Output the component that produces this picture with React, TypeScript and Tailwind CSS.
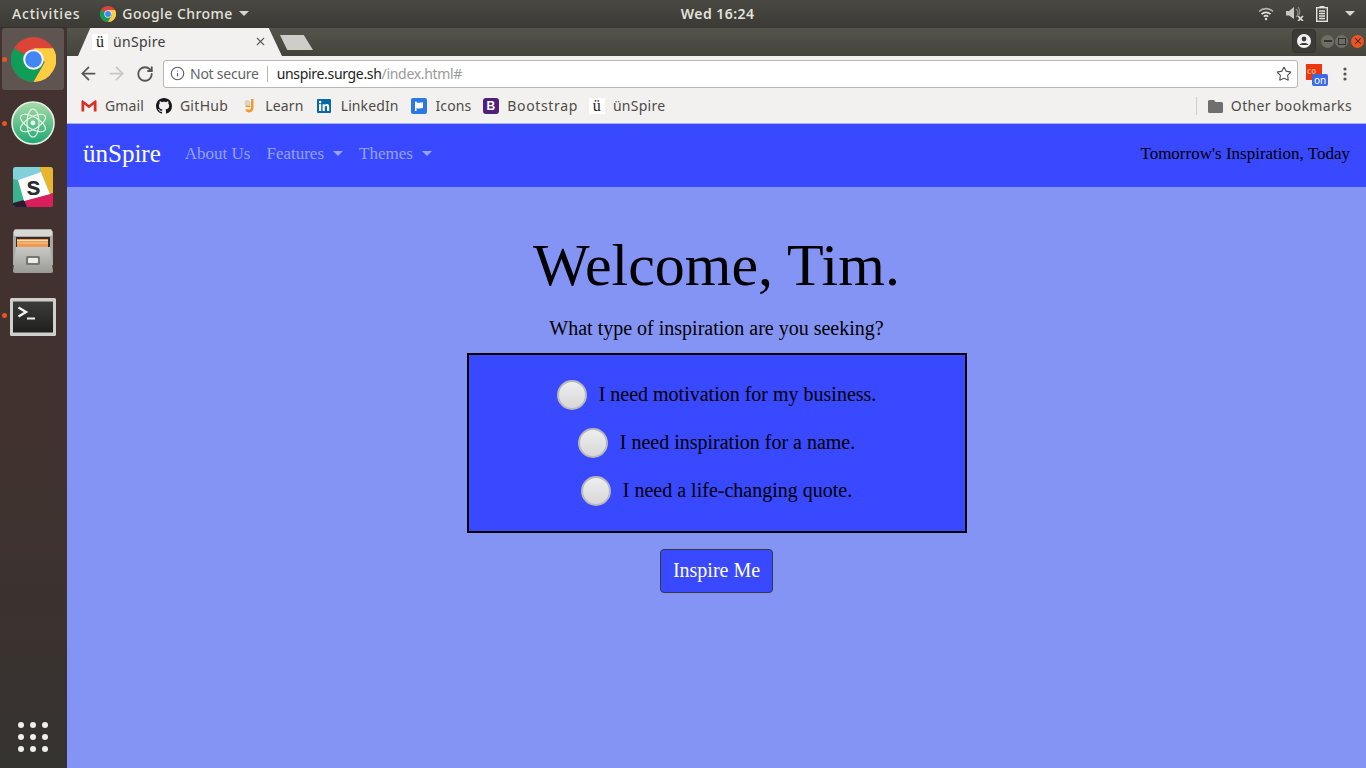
import { ArrowLeft, ArrowRight, RotateCw, Info, Star, X } from 'lucide-react'

const uiFont = "font-['Noto_Sans',sans-serif]"
const serif = "font-['Liberation_Serif',serif]"

function ChromeLogo({ size }: { size: number }) {
  return (
    <svg width={size} height={size} viewBox="0 0 48 48">
      <circle cx="24" cy="24" r="24" fill="#db4437" />
      <path d="M24 24 L3.2 12 A24 24 0 0 0 24 48 L36 27 Z" fill="#0f9d58" />
      <path d="M24 12 L45 12 A24 24 0 0 1 24 48 L36 27 Z" fill="#ffcd40" />
      <circle cx="24" cy="24" r="11" fill="#f1f1f1" />
      <circle cx="24" cy="24" r="8.8" fill="#4285f4" />
    </svg>
  )
}

function AtomIcon() {
  return (
    <svg width="44" height="44" viewBox="0 0 44 44">
      <defs>
        <linearGradient id="atomBg" x1="0" y1="0" x2="0" y2="1">
          <stop offset="0" stopColor="#a8dca6" />
          <stop offset="1" stopColor="#1fa873" />
        </linearGradient>
      </defs>
      <circle cx="22" cy="22" r="21" fill="url(#atomBg)" stroke="#e6efe8" strokeWidth="1.6" />
      <g fill="none" stroke="#e8f5ea" strokeWidth="1.2">
        <ellipse cx="22" cy="22" rx="14" ry="6" transform="rotate(30 22 22)" />
        <ellipse cx="22" cy="22" rx="14" ry="6" transform="rotate(-30 22 22)" />
        <ellipse cx="22" cy="22" rx="14" ry="6" transform="rotate(90 22 22)" />
      </g>
      <circle cx="22" cy="22" r="2.4" fill="#e8f5ea" />
    </svg>
  )
}

function SlackIcon() {
  return (
    <svg width="40" height="40" viewBox="0 0 40 40">
      <rect width="40" height="40" rx="3" fill="#3bb38f" />
      <path d="M3 0 H27 L28 5 L5 13 L0 12 V3 A3 3 0 0 1 3 0Z" fill="#82d0da" />
      <path d="M27 0 H37 A3 3 0 0 1 40 3 V26 L37 27 L28 5Z" fill="#e9b52e" />
      <path d="M37 27 L40 26 V37 A3 3 0 0 1 37 40 H14 L11 34Z" fill="#d91d5d" />
      <path d="M0 36 L11 33 L14 40 H3 A3 3 0 0 1 0 37Z" fill="#2a1a30" />
      <path d="M5 13 L28 5 L37 27 L11 34Z" fill="#ffffff" />
      <text x="20.5" y="28" textAnchor="middle" fontFamily="Liberation Sans, sans-serif" fontWeight="700" fontSize="26" fill="#2b2a30">s</text>
    </svg>
  )
}

function FilesIcon() {
  return (
    <svg width="42" height="44" viewBox="0 0 42 44">
      <defs>
        <linearGradient id="cabinetFront" x1="0" y1="0" x2="0" y2="1">
          <stop offset="0" stopColor="#c9c9c5" />
          <stop offset="1" stopColor="#9a9a96" />
        </linearGradient>
      </defs>
      <path d="M3 0 H39 L41 3 V36 H1 V3Z" fill="#a8a8a4" />
      <rect x="2" y="1" width="38" height="6" rx="1.5" fill="#d8d8d4" />
      <rect x="4" y="8" width="34" height="11" fill="#33302c" />
      <rect x="5" y="10" width="31" height="8" fill="#ee9a54" />
      <rect x="5" y="11" width="31" height="1" fill="#f8e2b8" />
      <rect x="5" y="13.5" width="31" height="1" fill="#f8c98a" />
      <path d="M4 18 H38 L41 42 a2 2 0 0 1 -2 2 H3 a2 2 0 0 1 -2 -2Z" fill="url(#cabinetFront)" />
      <rect x="14" y="27" width="14" height="9" rx="1.5" fill="#77776f" />
      <rect x="16" y="29" width="10" height="5" rx="1" fill="#ecece8" />
    </svg>
  )
}

function TerminalIcon() {
  return (
    <svg width="46" height="38" viewBox="0 0 46 38" className="mt-[3px]">
      <defs>
        <linearGradient id="termBg" x1="0" y1="0" x2="0" y2="1">
          <stop offset="0" stopColor="#3c3c3a" />
          <stop offset="1" stopColor="#1f1f1e" />
        </linearGradient>
      </defs>
      <rect width="46" height="38" rx="1.5" fill="#cfcfcb" />
      <rect x="3" y="3.5" width="40" height="31" fill="url(#termBg)" />
      <path d="M8.5 9.5 L16 14 L8.5 18.5" fill="none" stroke="#f2f2f2" strokeWidth="2.4" />
      <rect x="17" y="19.5" width="8" height="2" fill="#f2f2f2" />
    </svg>
  )
}

function GmailIcon() {
  return (
    <svg width="16" height="14" viewBox="0 0 16 14">
      <path d="M1 2 L8 7.5 L15 2 V12 H1Z" fill="#f4f4f4" />
      <path d="M0.5 2 V12.5 H3.2 V5.5 L8 9.3 L12.8 5.5 V12.5 H15.5 V2 L14.5 1 L8 6 L1.5 1Z" fill="#d93025" />
    </svg>
  )
}

function GithubIcon() {
  return (
    <svg width="16" height="16" viewBox="0 0 16 16" fill="#18171c">
      <path d="M8 0C3.58 0 0 3.58 0 8c0 3.54 2.29 6.53 5.47 7.59.4.07.55-.17.55-.38 0-.19-.01-.82-.01-1.49-2.01.37-2.53-.49-2.69-.94-.09-.23-.48-.94-.82-1.13-.28-.15-.68-.52-.01-.53.63-.01 1.08.58 1.23.82.72 1.21 1.87.87 2.33.66.07-.52.28-.87.51-1.07-1.78-.2-3.64-.89-3.64-3.95 0-.87.31-1.59.82-2.15-.08-.2-.36-1.02.08-2.12 0 0 .67-.21 2.2.82.64-.18 1.32-.27 2-.27s1.36.09 2 .27c1.53-1.04 2.2-.82 2.2-.82.44 1.1.16 1.92.08 2.12.51.56.82 1.27.82 2.15 0 3.07-1.87 3.75-3.65 3.95.29.25.54.73.54 1.48 0 1.07-.01 1.93-.01 2.2 0 .21.15.46.55.38A8.01 8.01 0 0 0 16 8c0-4.42-3.58-8-8-8z" />
    </svg>
  )
}

function LearnIcon() {
  return (
    <svg width="16" height="16" viewBox="0 0 16 16">
      <circle cx="6.5" cy="5" r="3" fill="#d9d4c8" />
      <path d="M10 1 H12.5 V10 A4.5 4.5 0 0 1 4 12 L6 11 A2.4 2.4 0 0 0 10 10Z" fill="#f29a2e" />
      <rect x="4.5" y="7.5" width="5" height="1.6" fill="#f29a2e" />
    </svg>
  )
}

function LinkedinIcon() {
  return (
    <svg width="16" height="16" viewBox="0 0 16 16">
      <rect y="1" width="14" height="14" rx="1" fill="#0568a8" />
      <rect x="2" y="6.2" width="2.2" height="6.8" fill="#fff" />
      <circle cx="3.1" cy="4.1" r="1.3" fill="#fff" />
      <path d="M5.6 6.2 H7.7 V7.2 C8.2 6.4 9 6 9.9 6 C11.6 6 12.2 7.1 12.2 8.8 V13 H10 V9.3 C10 8.4 9.7 7.9 9 7.9 C8.2 7.9 7.8 8.5 7.8 9.3 V13 H5.6Z" fill="#fff" />
    </svg>
  )
}

function IconsIcon() {
  return (
    <svg width="16" height="16" viewBox="0 0 16 16">
      <rect width="16" height="16" rx="2" fill="#2a78e4" />
      <path d="M4 3.5 H5.5 V4.2 C7.5 5.2 9 4.4 12 4.2 V10 C9 10.2 7.5 11 5.5 10 V13 H4Z" fill="#fff" />
    </svg>
  )
}

function BootstrapIcon() {
  return (
    <div className="w-4 h-4 rounded-[3px] bg-[#4f1f7a] flex items-center justify-center text-white text-[12px] font-bold font-['Liberation_Sans',sans-serif]">
      B
    </div>
  )
}

function Favicon() {
  return (
    <div className={`w-4 h-4 bg-white flex items-center justify-center text-[16px] leading-none text-[#222] ${serif}`}>
      ü
    </div>
  )
}

function Bookmark({ icon, label, className }: { icon: React.ReactNode; label: string; className: string }) {
  return (
    <div className={`flex items-center gap-2 text-[14px] leading-none text-[#4f4b47] ${className}`}>
      {icon}
      <span>{label}</span>
    </div>
  )
}

function DockItem({ children, active, running }: { children: React.ReactNode; active?: boolean; running?: boolean }) {
  return (
    <div className={`relative w-[62px] h-[62px] ml-[2px] mb-[2px] rounded-[3px] flex items-center justify-center ${active ? 'bg-[#5f5550]' : ''}`}>
      {running && <span className="absolute left-[0px] top-[29px] w-[5px] h-[5px] rounded-full bg-[#e95420]" />}
      {children}
    </div>
  )
}

function Radio({ label }: { label: string }) {
  return (
    <label className="flex items-center justify-center h-[48px]">
      <span className="w-[30px] h-[30px] rounded-full border-2 border-[#b8b8b8] bg-gradient-to-b from-[#ededed] to-[#d8d8d8] mt-[1px]" />
      <span className="ml-[12px] text-[20px] leading-none text-black">{label}</span>
    </label>
  )
}

export default function App() {
  return (
    <div className={`w-[1366px] h-[768px] overflow-hidden flex flex-col ${uiFont}`}>
      {/* ubuntu top bar */}
      <div className="h-[27px] shrink-0 flex items-center bg-gradient-to-b from-[#4a4944] to-[#3b3a35] text-[#e4e2dc] text-[14px] font-medium">
        <span className="ml-[12px] tracking-[0.8px]">Activities</span>
        <span className="ml-[20px]"><ChromeLogo size={16} /></span>
        <span className="ml-[6px] tracking-[0.45px]">Google Chrome</span>
        <span className="ml-[6px] w-0 h-0 border-x-[5px] border-x-transparent border-t-[5px] border-t-[#d8d6d0]" />
        <span className="ml-[432px] font-semibold tracking-[0.45px]">Wed 16:24</span>
        <div className="ml-auto mr-[11px] flex items-center gap-[12px]">
          <svg width="16" height="14" viewBox="0 0 16 14" fill="none" stroke="#e4e2dc" strokeWidth="1.6">
            <path d="M1 4.5 A10 10 0 0 1 15 4.5" opacity="0.7" />
            <path d="M3.5 7.2 A6.5 6.5 0 0 1 12.5 7.2" />
            <path d="M5.8 9.6 A3.2 3.2 0 0 1 10.2 9.6" />
            <circle cx="8" cy="12" r="1.2" fill="#e4e2dc" stroke="none" />
          </svg>
          <svg width="18" height="15" viewBox="0 0 18 15" fill="#c9c7c1">
            <path d="M0 5 H3 L8 1 V13 L3 9.5 H0Z" />
            <path d="M10 3 A5 5 0 0 1 10 11 M12 1 A8 8 0 0 1 13 9" fill="none" stroke="#8f8d87" strokeWidth="1.2" />
            <path d="M12 10 L17 15 M17 10 L12 15" stroke="#e4e2dc" strokeWidth="1.6" />
          </svg>
          <svg width="12" height="16" viewBox="0 0 12 16">
            <rect x="3.5" y="0" width="5" height="2" fill="#e4e2dc" />
            <rect x="0.7" y="1.7" width="10.6" height="13.6" fill="none" stroke="#e4e2dc" strokeWidth="1.4" />
            <path d="M3 5 H9 M3 7.5 H9 M3 10 H9 M3 12.5 H9" stroke="#e4e2dc" strokeWidth="1.3" />
          </svg>
          <span className="ml-[5px] w-0 h-0 border-x-[5px] border-x-transparent border-t-[5px] border-t-[#d8d6d0]" />
        </div>
      </div>

      <div className="flex-1 flex min-h-0">
        {/* launcher */}
        <div className="w-[67px] shrink-0 flex flex-col bg-gradient-to-b from-[#43322f] via-[#42322f] to-[#353330] border-t border-[#33312d]">
          <div className="flex flex-col">
            <DockItem active running><ChromeLogo size={45} /></DockItem>
            <DockItem running><AtomIcon /></DockItem>
            <DockItem><SlackIcon /></DockItem>
            <DockItem><FilesIcon /></DockItem>
            <DockItem running><TerminalIcon /></DockItem>
          </div>
          <div className="mt-auto mb-[16px] ml-[18px] grid grid-cols-3 gap-[6px] w-[30px]">
            {Array.from({ length: 9 }).map((_, i) => (
              <span key={i} className="w-[6px] h-[6px] rounded-full bg-[#f0efec]" />
            ))}
          </div>
        </div>

        {/* browser window */}
        <div className="flex-1 flex flex-col min-w-0">
          <div className="h-[29px] shrink-0 flex items-end bg-gradient-to-b from-[#55544b] to-[#45443c] border-t border-[#3a3934] relative">
            <div className="ml-[11px] w-[204px] h-[28px] bg-[#f2f1f0] [clip-path:polygon(0_100%,6%_0,93.5%_0,100%_100%)] flex items-center pl-[14px] pr-[15px] pb-[1px]">
              <Favicon />
              <span className="ml-[5px] text-[14px] leading-none text-[#3c3a38] tracking-[0.3px]">ünSpire</span>
              <X size={13} strokeWidth={2} className="ml-auto text-[#5a5a5a]" />
            </div>
            <div className="ml-[-2px] mb-[6px] w-[33px] h-[15px] bg-[#cfcdca] [clip-path:polygon(22%_100%,0_0,72%_0,100%_100%)]" />
            <div className="ml-auto mb-[3px] flex items-center mr-[2px]">
              <div className="w-[24px] h-[24px] rounded-[4px] bg-[#3c3b35] border border-[#33322d] flex items-center justify-center mr-[5px]">
                <svg width="14" height="14" viewBox="0 0 14 14">
                  <circle cx="7" cy="7" r="7" fill="#f4f4f4" />
                  <circle cx="7" cy="5" r="2.4" fill="#3c3b35" />
                  <path d="M2.6 11 C3.4 8.4 10.6 8.4 11.4 11Z" fill="#3c3b35" />
                </svg>
              </div>
              <span className="w-[13px] h-[13px] rounded-full bg-[#6e6d66] flex items-center justify-center mr-[1px]">
                <span className="w-[8px] h-[1.5px] bg-[#35342f]" />
              </span>
              <span className="w-[13px] h-[13px] rounded-full bg-[#6e6d66] flex items-center justify-center mr-[3px]">
                <span className="w-[8px] h-[7px] border border-[#35342f]" />
              </span>
              <span className="w-[13px] h-[13px] rounded-full bg-[#e95420] flex items-center justify-center">
                <X size={10} strokeWidth={2.5} className="text-[#3a2a20]" />
              </span>
            </div>
          </div>

          <div className="h-[35px] shrink-0 bg-[#f2f1f0] flex items-center">
            <ArrowLeft size={21} strokeWidth={2} className="ml-[11px] text-[#555]" />
            <ArrowRight size={21} strokeWidth={2} className="ml-[7px] text-[#c6c6c6]" />
            <RotateCw size={18} strokeWidth={2.4} className="ml-[9px] text-[#555]" />
            <div className="ml-[9px] w-[1135px] h-[28px] bg-white border border-[#b9b8b6] rounded-[3px] flex items-center text-[14px]">
              <Info size={15} strokeWidth={1.8} className="ml-[6px] text-[#5f5f5f]" />
              <span className="ml-[5px] text-[#5f6368] tracking-[-0.25px]">Not secure</span>
              <span className="ml-[8px] w-px h-[16px] bg-[#b8b8b8]" />
              <span className="ml-[9px] text-[#222] tracking-[-0.32px]">unspire.surge.sh</span>
              <span className="text-[#9a9a9a] tracking-[-0.32px]">/index.html#</span>
              <Star size={16} strokeWidth={1.7} className="ml-auto mr-[5px] text-[#555]" />
            </div>
            <div className="relative ml-[8px] w-[22px] h-[24px] mt-[4px]">
              <div className="absolute left-0 top-0 w-[16px] h-[16px] bg-[#f0360f] text-[#f8a070] text-[8px] leading-[14px] font-bold pl-[1px]">co</div>
              <div className="absolute left-[6px] top-[10px] w-[16px] h-[12px] rounded-[2px] bg-[#3b69e8] text-white text-[10px] leading-[12px] text-center">on</div>
            </div>
            <svg width="4" height="14" viewBox="0 0 4 14" className="ml-[15px]" fill="#555">
              <circle cx="2" cy="2" r="1.6" />
              <circle cx="2" cy="7" r="1.6" />
              <circle cx="2" cy="12" r="1.6" />
            </svg>
          </div>

          <div className="h-[32px] shrink-0 bg-[#f2f1f0] flex items-center pb-[2px]">
            <Bookmark className="ml-[14px] tracking-[0.1px]" icon={<GmailIcon />} label="Gmail" />
            <Bookmark className="ml-[12px] tracking-[0.3px]" icon={<GithubIcon />} label="GitHub" />
            <Bookmark className="ml-[13px] tracking-[0.2px]" icon={<LearnIcon />} label="Learn" />
            <Bookmark className="ml-[13px] tracking-[0.1px]" icon={<LinkedinIcon />} label="LinkedIn" />
            <Bookmark className="ml-[13px] tracking-[0.1px]" icon={<IconsIcon />} label="Icons" />
            <Bookmark className="ml-[12px] tracking-[0.65px]" icon={<BootstrapIcon />} label="Bootstrap" />
            <Bookmark className="ml-[11px] tracking-[0.25px]" icon={<Favicon />} label="ünSpire" />
            <span className="ml-auto w-px h-[18px] bg-[#cfcecc]" />
            <div className="ml-[11px] mr-[14px] flex items-center gap-[8px]">
              <svg width="15" height="13" viewBox="0 0 15 13" fill="#6f6f6f">
                <path d="M0 1.5 A1.5 1.5 0 0 1 1.5 0 H6 L7.5 2 H13.5 A1.5 1.5 0 0 1 15 3.5 V11.5 A1.5 1.5 0 0 1 13.5 13 H1.5 A1.5 1.5 0 0 1 0 11.5Z" />
              </svg>
              <span className="text-[14px] leading-none text-[#4f4b47] tracking-[0.35px]">Other bookmarks</span>
            </div>
          </div>

          {/* page */}
          <div className={`flex-1 flex flex-col bg-[#8494f5] ${serif} border-t border-[#a8b2f5]`}>
            <nav className="h-[63px] shrink-0 bg-[#3849ff] flex items-center px-[16px] pb-[4px]">
              <a className="text-[25px] text-white leading-none">ünSpire</a>
              <a className="ml-[24px] text-[17px] text-[#98a2ff] leading-none">About Us</a>
              <a className="ml-[16px] text-[17px] text-[#98a2ff] leading-none flex items-center">
                Features
                <span className="ml-[9px] w-0 h-0 border-x-[5px] border-x-transparent border-t-[5px] border-t-[#98a2ff]" />
              </a>
              <a className="ml-[16px] text-[17px] text-[#98a2ff] leading-none flex items-center">
                Themes
                <span className="ml-[9px] w-0 h-0 border-x-[5px] border-x-transparent border-t-[5px] border-t-[#98a2ff]" />
              </a>
              <span className="ml-auto text-[17px] text-black leading-none">Tomorrow's Inspiration, Today</span>
            </nav>

            <div className="flex flex-col items-center">
              <h1 className="mt-[40px] text-[60px] leading-[77px] text-black">Welcome, Tim.</h1>
              <p className="mt-[9px] text-[20px] leading-[30px] text-black">What type of inspiration are you seeking?</p>
              <div className="mt-[10px] w-[500px] h-[180px] border-2 border-black bg-[#3849ff] flex flex-col justify-center pb-[2px]">
                <Radio label="I need motivation for my business." />
                <Radio label="I need inspiration for a name." />
                <Radio label="I need a life-changing quote." />
              </div>
              <button className="mt-[16px] w-[113px] h-[44px] rounded-[4px] border border-[#343a40] bg-[#3849ff] text-white text-[20px] leading-none pb-[3px]">
                Inspire Me
              </button>
            </div>
          </div>
        </div>
      </div>
    </div>
  )
}
